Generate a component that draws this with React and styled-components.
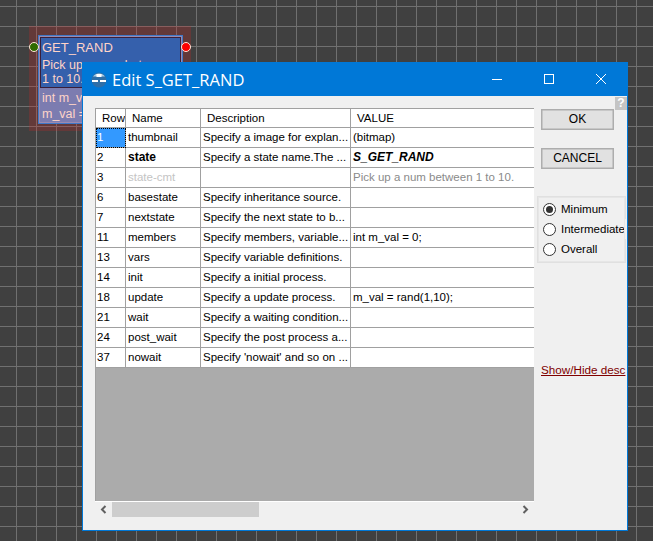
import React from 'react'
import styled, { createGlobalStyle } from 'styled-components'

const GlobalStyle = createGlobalStyle`
    html, body {
        margin: 0;
        padding: 0;
    }
    * {
        box-sizing: border-box;
    }
`

const Canvas = styled.div`
    position: relative;
    width: 653px;
    height: 541px;
    overflow: hidden;
    background-color: #404040;
    background-image:
        linear-gradient(to right, #707070 1px, transparent 1px),
        linear-gradient(to bottom, #707070 1px, transparent 1px);
    background-size: 20px 20px;
    background-position: 16px 6px;
    font-family: "Liberation Sans", Arial, sans-serif;
    font-size: 11.5px;
`

/* state node sitting on the canvas */
const Halo = styled.div`
    position: absolute;
    left: 29px;
    top: 26px;
    width: 162px;
    height: 105px;
    background: rgba(225, 30, 30, 0.22);
`

const Node = styled.div`
    position: absolute;
    left: 38px;
    top: 35px;
    width: 145px;
    height: 89px;
    border: 1px solid #3f78c8;
    background: #9a8ab0;
    padding: 1px;
    display: flex;
    flex-direction: column;
    color: #ffd4c8;
    overflow: hidden;
`

const NodeHead = styled.div`
    height: 53px;
    background: #3560ac;
    border: 1px solid #3a1f3a;
    padding: 1px 0 0 1px;
`

const NodeTitle = styled.div`
    font-size: 13px;
    line-height: 17px;
    margin-bottom: 2px;
`

const NodeText = styled.div`
    font-size: 12.5px;
    line-height: 14px;
    white-space: nowrap;
`

const NodeBody = styled.div`
    flex: 1;
    background: #7c7cb0;
    padding: 2px 0 0 2px;
    font-size: 12.5px;
    line-height: 16px;
    white-space: nowrap;
`

const Pin = styled.span`
    position: absolute;
    top: 42px;
    left: ${(p) => p.$left}px;
    width: 10px;
    height: 10px;
    border-radius: 50%;
    border: 1px solid #ffe8d8;
    background: ${(p) => p.$color};
`

/* edit dialog */
const Dialog = styled.div`
    position: absolute;
    left: 82px;
    top: 62px;
    width: 546px;
    height: 469px;
    border: 1px solid #0078d7;
    background: #f0f0f0;
    display: flex;
    flex-direction: column;
`

const TitleBar = styled.div`
    height: 33px;
    flex: none;
    background: #0078d7;
    display: flex;
    align-items: center;
    color: #fff;
    padding-left: 8px;
`

const TitleText = styled.span`
    font-family: "Open Sans", sans-serif;
    font-size: 16.5px;
    margin-left: 5px;
    flex: 1;
`

const WinButton = styled.div`
    width: 52px;
    height: 32px;
    align-self: flex-start;
    display: flex;
    align-items: center;
    justify-content: center;
`

const Body = styled.div`
    position: relative;
    flex: 1;
    display: flex;
    padding: 12px 0 13px 12px;
`

const HelpBadge = styled.div`
    position: absolute;
    right: 0;
    top: 1px;
    width: 12px;
    height: 13px;
    background: #c4c4c4;
    color: #fff;
    font-weight: bold;
    font-size: 12px;
    line-height: 13px;
    text-align: center;
`

const TablePane = styled.div`
    width: 439px;
    flex: none;
    display: flex;
    flex-direction: column;
`

const Grid = styled.div`
    flex: 1;
    display: flex;
    flex-direction: column;
    background: #ababab;
    border-left: 1px solid #a0a0a0;
    border-top: 1px solid #a0a0a0;
`

const Row = styled.div`
    display: grid;
    grid-template-columns: 30px 75px 150px 1fr;
    height: ${(p) => (p.$header ? 19 : 20)}px;
    background: #fff;
`

const Cell = styled.div`
    border-right: 1px solid #a0a0a0;
    border-bottom: 1px solid #a0a0a0;
    padding-left: ${(p) => p.$pad ?? 2}px;
    line-height: 19px;
    white-space: nowrap;
    overflow: hidden;
    color: ${(p) => p.$color || '#000'};
    font-size: ${(p) => (p.$bold ? 12 : 11.5)}px;
    font-weight: ${(p) => (p.$bold ? 'bold' : 'normal')};
    font-style: ${(p) => (p.$italic ? 'italic' : 'normal')};

    &:last-child {
        border-right: none;
    }
`

const RowNumber = styled(Cell)`
    padding-left: 1px;
    ${(p) => p.$selected && `
        background: #3399ff;
        color: #fff;
        outline: 1px dotted #000;
        outline-offset: -1px;
    `}
`

const Scrollbar = styled.div`
    height: 16px;
    flex: none;
    border-top: 1px solid #fff;
    display: flex;
    align-items: center;
    background: #f0f0f0;
`

const ScrollArrow = styled.div`
    width: 17px;
    height: 15px;
    display: flex;
    align-items: center;
    justify-content: center;
`

const ScrollThumb = styled.div`
    width: 147px;
    height: 15px;
    background: #cdcdcd;
`

const ScrollTrack = styled.div`
    flex: 1;
`

const SidePane = styled.div`
    flex: 1;
    display: flex;
    flex-direction: column;
    padding-top: 1px;
`

const PushButton = styled.button`
    width: 73px;
    height: 21px;
    flex: none;
    margin: 0 0 18px 7px;
    padding: 0 0 2px;
    background: #e1e1e1;
    border: 1px solid #adadad;
    box-shadow: inset 0 0 0 0.5px #adadad;
    font-family: inherit;
    font-size: 12px;
    color: #000;
`

const RadioGroup = styled.div`
    width: 89px;
    height: 67px;
    flex: none;
    margin: 9px 0 0 3px;
    border: 1px solid #e0e0e0;
    outline: 1px solid #e6e6e6;
    outline-offset: -2px;
    display: flex;
    flex-direction: column;
    padding-top: 2px;
`

const RadioRow = styled.label`
    height: 20px;
    display: flex;
    align-items: center;
    padding-left: 5px;
    gap: 5px;
    white-space: nowrap;
    font-size: 11.5px;
    ${(p) => p.$covers && `
        background: #f0f0f0;
        margin-right: -1px;
    `}
`

const RadioDot = styled.span`
    width: 13px;
    height: 13px;
    border-radius: 50%;
    border: 1px solid #333;
    background: #fff;
    display: flex;
    align-items: center;
    justify-content: center;
    flex: none;

    &::after {
        content: '';
        width: 7px;
        height: 7px;
        border-radius: 50%;
        background: ${(p) => (p.$checked ? '#333' : 'transparent')};
    }
`

const DescLink = styled.a`
    margin: 100px 0 0 7px;
    color: #800000;
    text-decoration: underline;
    white-space: nowrap;
    font-size: 11.7px;
`

const rows = [
    { no: '1', name: 'thumbnail', desc: 'Specify a image for explan...', value: '(bitmap)' },
    { no: '2', name: 'state', desc: 'Specify a state name.The ...', value: 'S_GET_RAND', strong: true },
    { no: '3', name: 'state-cmt', desc: '', value: 'Pick up a num between 1 to 10.', muted: true },
    { no: '6', name: 'basestate', desc: 'Specify inheritance source.', value: '' },
    { no: '7', name: 'nextstate', desc: 'Specify the next state to b...', value: '' },
    { no: '11', name: 'members', desc: 'Specify members, variable...', value: 'int m_val = 0;' },
    { no: '13', name: 'vars', desc: 'Specify variable definitions.', value: '' },
    { no: '14', name: 'init', desc: 'Specify a initial process.', value: '' },
    { no: '18', name: 'update', desc: 'Specify a update process.', value: 'm_val = rand(1,10);' },
    { no: '21', name: 'wait', desc: 'Specify a waiting condition...', value: '' },
    { no: '24', name: 'post_wait', desc: 'Specify the post process a...', value: '' },
    { no: '37', name: 'nowait', desc: "Specify 'nowait' and so on ...", value: '' },
]

const AppIcon = () => (
    <svg width="16" height="16" viewBox="0 0 16 16">
        <circle cx="8" cy="8" r="7.5" fill="#2f6fa8" />
        <path d="M2 4.5a7.5 7.5 0 0 1 12 0z" fill="#a8cce6" />
        <rect x="5.5" y="2" width="5" height="3" fill="#fff" />
        <rect x="1" y="8" width="6" height="2" fill="#fff" />
        <rect x="9" y="8" width="6" height="2" fill="#fff" />
    </svg>
)

export default function App() {
    return (
        <Canvas>
            <GlobalStyle />
            <Halo />
            <Node>
                <NodeHead>
                    <NodeTitle>GET_RAND</NodeTitle>
                    <NodeText>Pick up a num between</NodeText>
                    <NodeText>1 to 10.</NodeText>
                </NodeHead>
                <NodeBody>
                    <div>int m_val = 0;</div>
                    <div>m_val = rand(1,10);</div>
                </NodeBody>
            </Node>
            <Pin $left={29} $color="#2f6b00" />
            <Pin $left={181} $color="#ff0000" />

            <Dialog>
                <TitleBar>
                    <AppIcon />
                    <TitleText>Edit S_GET_RAND</TitleText>
                    <WinButton>
                        <svg width="10" height="10"><path d="M0 5.5h10" stroke="#fff" /></svg>
                    </WinButton>
                    <WinButton>
                        <svg width="10" height="10"><rect x="0.5" y="0.5" width="9" height="9" fill="none" stroke="#fff" /></svg>
                    </WinButton>
                    <WinButton>
                        <svg width="10" height="10"><path d="M0 0l10 10M10 0L0 10" stroke="#fff" /></svg>
                    </WinButton>
                </TitleBar>
                <Body>
                    <HelpBadge>?</HelpBadge>
                    <TablePane>
                        <Grid>
                            <Row $header>
                                <Cell $pad={6}>Row</Cell>
                                <Cell $pad={6}>Name</Cell>
                                <Cell $pad={6}>Description</Cell>
                                <Cell $pad={6}>VALUE</Cell>
                            </Row>
                            {rows.map((r, i) => (
                                <Row key={r.no}>
                                    <RowNumber $selected={i === 0}>{r.no}</RowNumber>
                                    <Cell $bold={r.strong} $color={r.muted ? '#c4c4c4' : undefined}>{r.name}</Cell>
                                    <Cell>{r.desc}</Cell>
                                    <Cell
                                        $bold={r.strong}
                                        $italic={r.strong}
                                        $color={r.muted ? '#8a8a8a' : undefined}
                                    >
                                        {r.value}
                                    </Cell>
                                </Row>
                            ))}
                        </Grid>
                        <Scrollbar>
                            <ScrollArrow>
                                <svg width="7" height="9" viewBox="0 0 7 9"><path d="M5.5 1L2 4.5 5.5 8" fill="none" stroke="#606060" strokeWidth="2" /></svg>
                            </ScrollArrow>
                            <ScrollThumb />
                            <ScrollTrack />
                            <ScrollArrow>
                                <svg width="7" height="9" viewBox="0 0 7 9"><path d="M1.5 1L5 4.5 1.5 8" fill="none" stroke="#606060" strokeWidth="2" /></svg>
                            </ScrollArrow>
                        </Scrollbar>
                    </TablePane>
                    <SidePane>
                        <PushButton>OK</PushButton>
                        <PushButton>CANCEL</PushButton>
                        <RadioGroup>
                            <RadioRow><RadioDot $checked />Minimum</RadioRow>
                            <RadioRow $covers><RadioDot />Intermediate</RadioRow>
                            <RadioRow><RadioDot />Overall</RadioRow>
                        </RadioGroup>
                        <DescLink>Show/Hide desc</DescLink>
                    </SidePane>
                </Body>
            </Dialog>
        </Canvas>
    )
}
